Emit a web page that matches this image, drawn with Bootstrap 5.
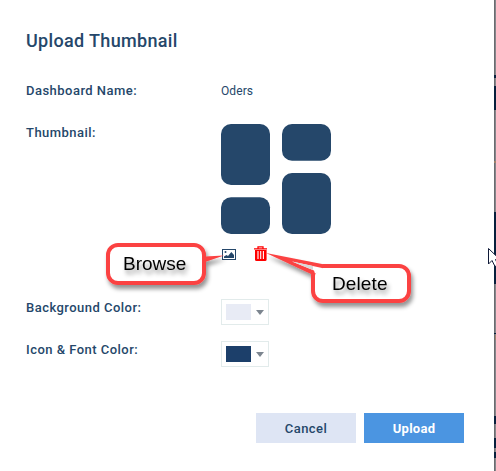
<!DOCTYPE html>
<html lang="en">
<head>
<meta charset="utf-8">
<meta name="viewport" content="width=device-width, initial-scale=1">
<title>Upload Thumbnail</title>
<link href="https://cdn.jsdelivr.net/npm/bootstrap@5.3.0/dist/css/bootstrap.min.css" rel="stylesheet">
<style>
body{font-family:Roboto,sans-serif;color:#25476a;height:471px;overflow:hidden;background:#fff}
.dialog-pane{width:494px;height:471px;padding:29px 30px 28px 26px}
.dialog-title{font-size:18px;line-height:24px;font-weight:500;letter-spacing:.34px;margin-bottom:28px}
.field-row{font-size:13px;line-height:20px}
.field-label{width:195px;font-weight:500;letter-spacing:.47px}
.row-thumb .field-label,.row-color .field-label{line-height:18px}
.field-value{font-size:12px;letter-spacing:.1px}
.row-name{height:43px}.row-thumb{height:175px}.row-color{height:42px}
.thumb-art{width:110px;height:110px}
.thumb-icons{height:20px;margin-top:10px}
.swatch-picker{width:48px;height:26px;border:1px solid #e2ebeb;padding:0 4px}
.swatch{width:25px;height:16px;background:#e8ebf5}
.swatch-dark{background:#1c3f6a}
.caret{width:0;height:0;border:4px solid transparent;border-top:5px solid #7c858f;border-bottom:0;margin-right:.5px}
.btn-dialog{width:100px;height:30px;border:0;border-radius:0;padding:0;font-size:13px;font-weight:500;letter-spacing:.45px;line-height:32px;background:#dee5f4;color:#25476a}
.btn-upload{background:#4b95e1;color:#fff;font-weight:700;letter-spacing:.25px}
.edge-strip{width:2px;height:471px}
.overlay{left:0;top:0;pointer-events:none}
.note-text{font:19px "Liberation Sans",Arial,sans-serif;fill:#000}
</style>
<script src="https://cdn.jsdelivr.net/npm/bootstrap@5.3.0/dist/js/bootstrap.bundle.min.js"></script>
</head>
<body class="position-relative d-flex">
<main class="dialog-pane d-flex flex-column">
  <h1 class="dialog-title">Upload Thumbnail</h1>
  <div class="field-row row-name d-flex"><div class="field-label">Dashboard Name:</div><div class="field-value">Oders</div></div>
  <div class="field-row row-thumb d-flex">
    <div class="field-label">Thumbnail:</div>
    <div>
      <svg class="thumb-art d-block" viewBox="0 0 110 110" fill="#25476a"><rect width="49" height="61" rx="10"/><rect x="61" width="49" height="36.7" rx="10"/><rect y="73.3" width="49" height="36.7" rx="10"/><rect x="61" y="49" width="49" height="61" rx="10"/></svg>
      <div class="thumb-icons d-flex align-items-center">
        <svg width="16" height="20" viewBox="0 0 16 20"><rect x="1.5" y="5.5" width="13" height="10" fill="#fff" stroke="#25476a"/><path d="M3 14v-1.500l2.500-1.500 1.500 1L10.300 8l2.700 3v3z" fill="#25476a"/><circle cx="4.500" cy="8" r="1" fill="#25476a"/></svg>
        <svg class="ms-3" width="16" height="20" viewBox="0 0 16 20"><path d="M5 4.500V2.800h5v1.700M1 4.800h13" fill="none" stroke="red" stroke-width="1.300"/><path d="M2 6h11.600v9.500q0 1.500-1.500 1.500H3.500Q2 17 2 15.500z" fill="red"/><path d="M5 7v8M7.700 7v8M10.400 7v8" stroke="#fff" stroke-width="1.100"/></svg>
      </div>
    </div>
  </div>
  <div class="field-row row-color d-flex"><div class="field-label">Background Color:</div><div class="swatch-picker d-flex align-items-center justify-content-between"><span class="swatch"></span><span class="caret"></span></div></div>
  <div class="field-row row-color d-flex"><div class="field-label">Icon &amp; Font Color:</div><div class="swatch-picker d-flex align-items-center justify-content-between"><span class="swatch swatch-dark"></span><span class="caret"></span></div></div>
  <div class="d-flex justify-content-end gap-2 mt-auto"><button class="btn btn-dialog" type="button">Cancel</button><button class="btn btn-dialog btn-upload" type="button">Upload</button></div>
</main>
<svg class="edge-strip" viewBox="0 0 2 471" shape-rendering="crispEdges"><path fill="#6b6b70" d="M0 0h1v471H0z"/><path fill="#86868a" d="M1 0h1v471H1z"/><path fill="#07203d" d="M0 75h2v3H0zM0 86h2v24H0zM0 212h2v72H0zM0 416h2v8H0zM0 438h2v10H0zM0 452h2v6H0zM0 333h2v1H0z"/><path fill="#a1826b" d="M0 161h2v2H0zM1 335h1v5H1z"/></svg>
<svg class="overlay position-absolute" width="496" height="471" viewBox="0 0 496 471">
  <defs><filter id="shade" x="-20%" y="-30%" width="140%" height="170%"><feDropShadow dx="2" dy="4" stdDeviation="2" flood-color="#000" flood-opacity=".42"/></filter></defs>
  <g filter="url(#shade)">
    <rect x="108" y="245" width="96" height="38" rx="10" fill="#fff" stroke="#fb4343" stroke-width="4"/>
    <path d="M205 256.500L224 255.500 205 262z" fill="#fb4343"/>
    <rect x="313" y="266" width="96" height="35" rx="10" fill="#fff" stroke="#fb4343" stroke-width="4"/>
    <path d="M266 253L322 264V268L315 274H311z" fill="#fb4343"/>
    <path d="M292 261.500L322 268V271L315 273.500L314 270.500z" fill="#fff"/>
    <path d="M292 261.500L313 266V270z" fill="#d8d8d8"/>
  </g>
  <g filter="url(#shade)" class="note-text"><text x="123" y="270">Browse</text><text x="332" y="290" textLength="55.500">Delete</text></g>
  <path d="M488.500 248.500V264L492 260.500 495 266.500 498 265 495.500 259.500H500z" fill="#fff" stroke="#101a38"/>
</svg>
</body>
</html>
